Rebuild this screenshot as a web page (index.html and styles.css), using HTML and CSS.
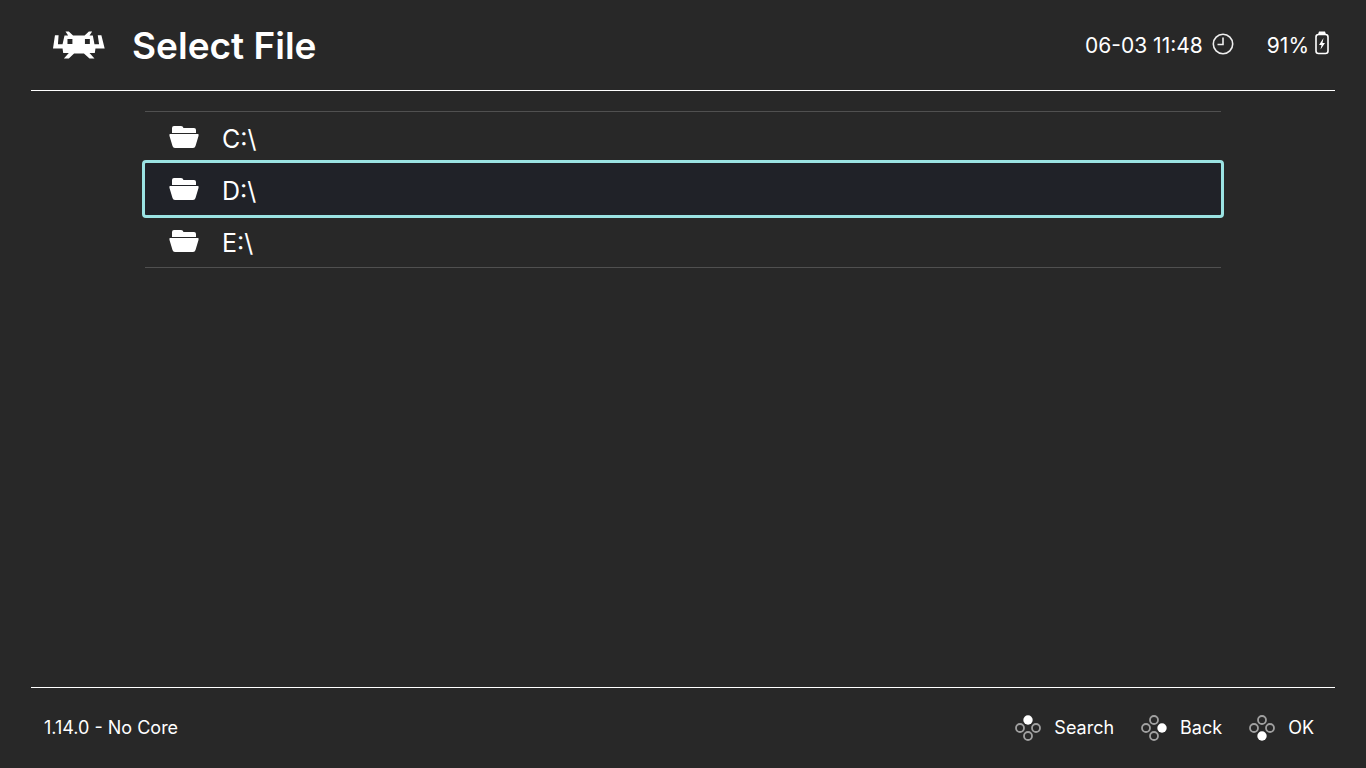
FILE: index.html
```html
<!DOCTYPE html>
<html lang="en">
<head>
    <meta charset="UTF-8">
    <meta name="viewport" content="width=device-width, initial-scale=1.0">
    <title>Select File</title>
    <link rel="stylesheet" href="styles.css">
</head>
<body>
    <header class="header">
        <svg class="logo" viewBox="27 26 158 84" aria-hidden="true">
            <path fill-rule="evenodd" d="M65 27H75L88 39H123L136 27H146L138 39H148L153 66H167L163 38H174L184 79H156L154 92H138L153 109H138L121 94H91L75 109H60L75 92H58L56 79H27L33 38H44L42 66H56L62 39H73ZM71 50V65H86V50ZM124 50V65H139V50Z"/>
        </svg>
        <h1>Select File</h1>
        <div class="status">
            <span>06-03 11:48</span>
            <svg class="clock" viewBox="0 0 22 22" aria-hidden="true">
                <circle cx="11" cy="11" r="9.7"/>
                <path d="M11 4.5V11.5H5.5"/>
            </svg>
            <span>91%</span>
            <svg class="battery" viewBox="0 0 14 24" aria-hidden="true">
                <rect class="case" x="1" y="3.5" width="12" height="19" rx="2.5"/>
                <path d="M4 0.5H10L11 3.5H3Z"/>
                <path d="M8.5 7L4 14H6.5L5.5 18.500L10 12H7.500Z"/>
            </svg>
        </div>
    </header>

    <main class="content">
        <ul class="files">
            <li><button class="file">
                <svg class="folder" viewBox="0 0 30 24" aria-hidden="true">
                    <path d="M3 8V3Q3 1 5 1H12Q14 1 14.5 3H25Q27 3 27 5V8Z"/>
                    <path d="M1 9H29Q30 9 29.5 11L26.5 21Q26 23 24 23H6Q4 23 3.5 21L0.5 11Q0 9 1 9Z"/>
                </svg>
                <span>C:\</span>
            </button></li>
            <li><button class="file selected">
                <svg class="folder" viewBox="0 0 30 24" aria-hidden="true">
                    <path d="M3 8V3Q3 1 5 1H12Q14 1 14.5 3H25Q27 3 27 5V8Z"/>
                    <path d="M1 9H29Q30 9 29.5 11L26.5 21Q26 23 24 23H6Q4 23 3.5 21L0.5 11Q0 9 1 9Z"/>
                </svg>
                <span>D:\</span>
            </button></li>
            <li><button class="file">
                <svg class="folder" viewBox="0 0 30 24" aria-hidden="true">
                    <path d="M3 8V3Q3 1 5 1H12Q14 1 14.5 3H25Q27 3 27 5V8Z"/>
                    <path d="M1 9H29Q30 9 29.5 11L26.5 21Q26 23 24 23H6Q4 23 3.5 21L0.5 11Q0 9 1 9Z"/>
                </svg>
                <span>E:\</span>
            </button></li>
        </ul>
    </main>

    <footer class="footer">
        <span class="version">1.14.0 - No Core</span>
        <div class="hints">
            <button class="hint">
                <svg class="pad" viewBox="0 0 26 26" aria-hidden="true">
                    <circle class="on" cx="13" cy="5" r="4.7"/>
                    <circle cx="5" cy="13" r="4"/>
                    <circle cx="21" cy="13" r="4"/>
                    <circle cx="13" cy="21" r="4"/>
                </svg>
                <span>Search</span>
            </button>
            <button class="hint">
                <svg class="pad" viewBox="0 0 26 26" aria-hidden="true">
                    <circle cx="13" cy="5" r="4"/>
                    <circle cx="5" cy="13" r="4"/>
                    <circle class="on" cx="21" cy="13" r="4.7"/>
                    <circle cx="13" cy="21" r="4"/>
                </svg>
                <span>Back</span>
            </button>
            <button class="hint">
                <svg class="pad" viewBox="0 0 26 26" aria-hidden="true">
                    <circle cx="13" cy="5" r="4"/>
                    <circle cx="5" cy="13" r="4"/>
                    <circle cx="21" cy="13" r="4"/>
                    <circle class="on" cx="13" cy="21" r="4.7"/>
                </svg>
                <span>OK</span>
            </button>
        </div>
    </footer>
</body>
</html>
```
FILE: styles.css
```css
* {
    box-sizing: border-box;
}
body {
    margin: 0;
    padding: 0 31px;
    min-height: 100vh;
    display: flex;
    flex-direction: column;
    background-color: #282828;
    color: #fff;
    font-family: Inter, sans-serif;
}
button {
    border: none;
    background: none;
    color: inherit;
    font: inherit;
    cursor: pointer;
}
svg {
    flex: none;
    fill: #fff;
}

/* Header */
.header {
    display: flex;
    align-items: center;
    height: 91px;
    padding: 0 6px 0 22px;
    border-bottom: 1px solid #fff;
}
.logo {
    width: 52px;
    height: 28px;
}
h1 {
    margin: 0 0 0 27px;
    font-size: 37px;
    font-weight: 600;
}
.status {
    display: flex;
    align-items: center;
    margin-left: auto;
    font-size: 21px;
}
.clock {
    width: 22px;
    height: 22px;
    margin: 0 33px 2px 9px;
}
.clock circle,
.clock path {
    fill: none;
    stroke: #eee;
    stroke-width: 1.6;
}
.battery {
    width: 14px;
    height: 24px;
    margin: 0 0 4px 6px;
}
.battery .case {
    fill: none;
    stroke: #fff;
    stroke-width: 1.6;
}

/* File list */
.content {
    flex: 1;
    padding: 20px 114px;
}
.files {
    margin: 0;
    padding: 0;
    list-style: none;
    box-shadow: inset 0 1px #505050;
    border-bottom: 1px solid #505050;
}
.file {
    display: flex;
    align-items: center;
    gap: 23px;
    width: 100%;
    height: 52px;
    padding: 0 24px;
    font-size: 25px;
    text-align: left;
}
.file span {
    padding-top: 3px;
}
.selected {
    background-color: #202228;
    outline: 3px solid #9be3e3;
    border-radius: 1px;
}
.folder {
    width: 30px;
    height: 24px;
}

/* Footer */
.footer {
    display: flex;
    align-items: center;
    justify-content: space-between;
    height: 81px;
    padding: 0 21px 0 13px;
    border-top: 1px solid #fff;
    font-size: 18px;
}
.footer span {
    padding-bottom: 1px;
}
.hints {
    display: flex;
    gap: 27px;
}
.hint {
    display: flex;
    align-items: center;
    gap: 13px;
    padding: 0;
}
.pad {
    width: 26px;
    height: 26px;
}
.pad circle {
    fill: none;
    stroke: #a0a0a0;
    stroke-width: 1.8;
}
.pad .on {
    fill: #fff;
    stroke: none;
}
```
